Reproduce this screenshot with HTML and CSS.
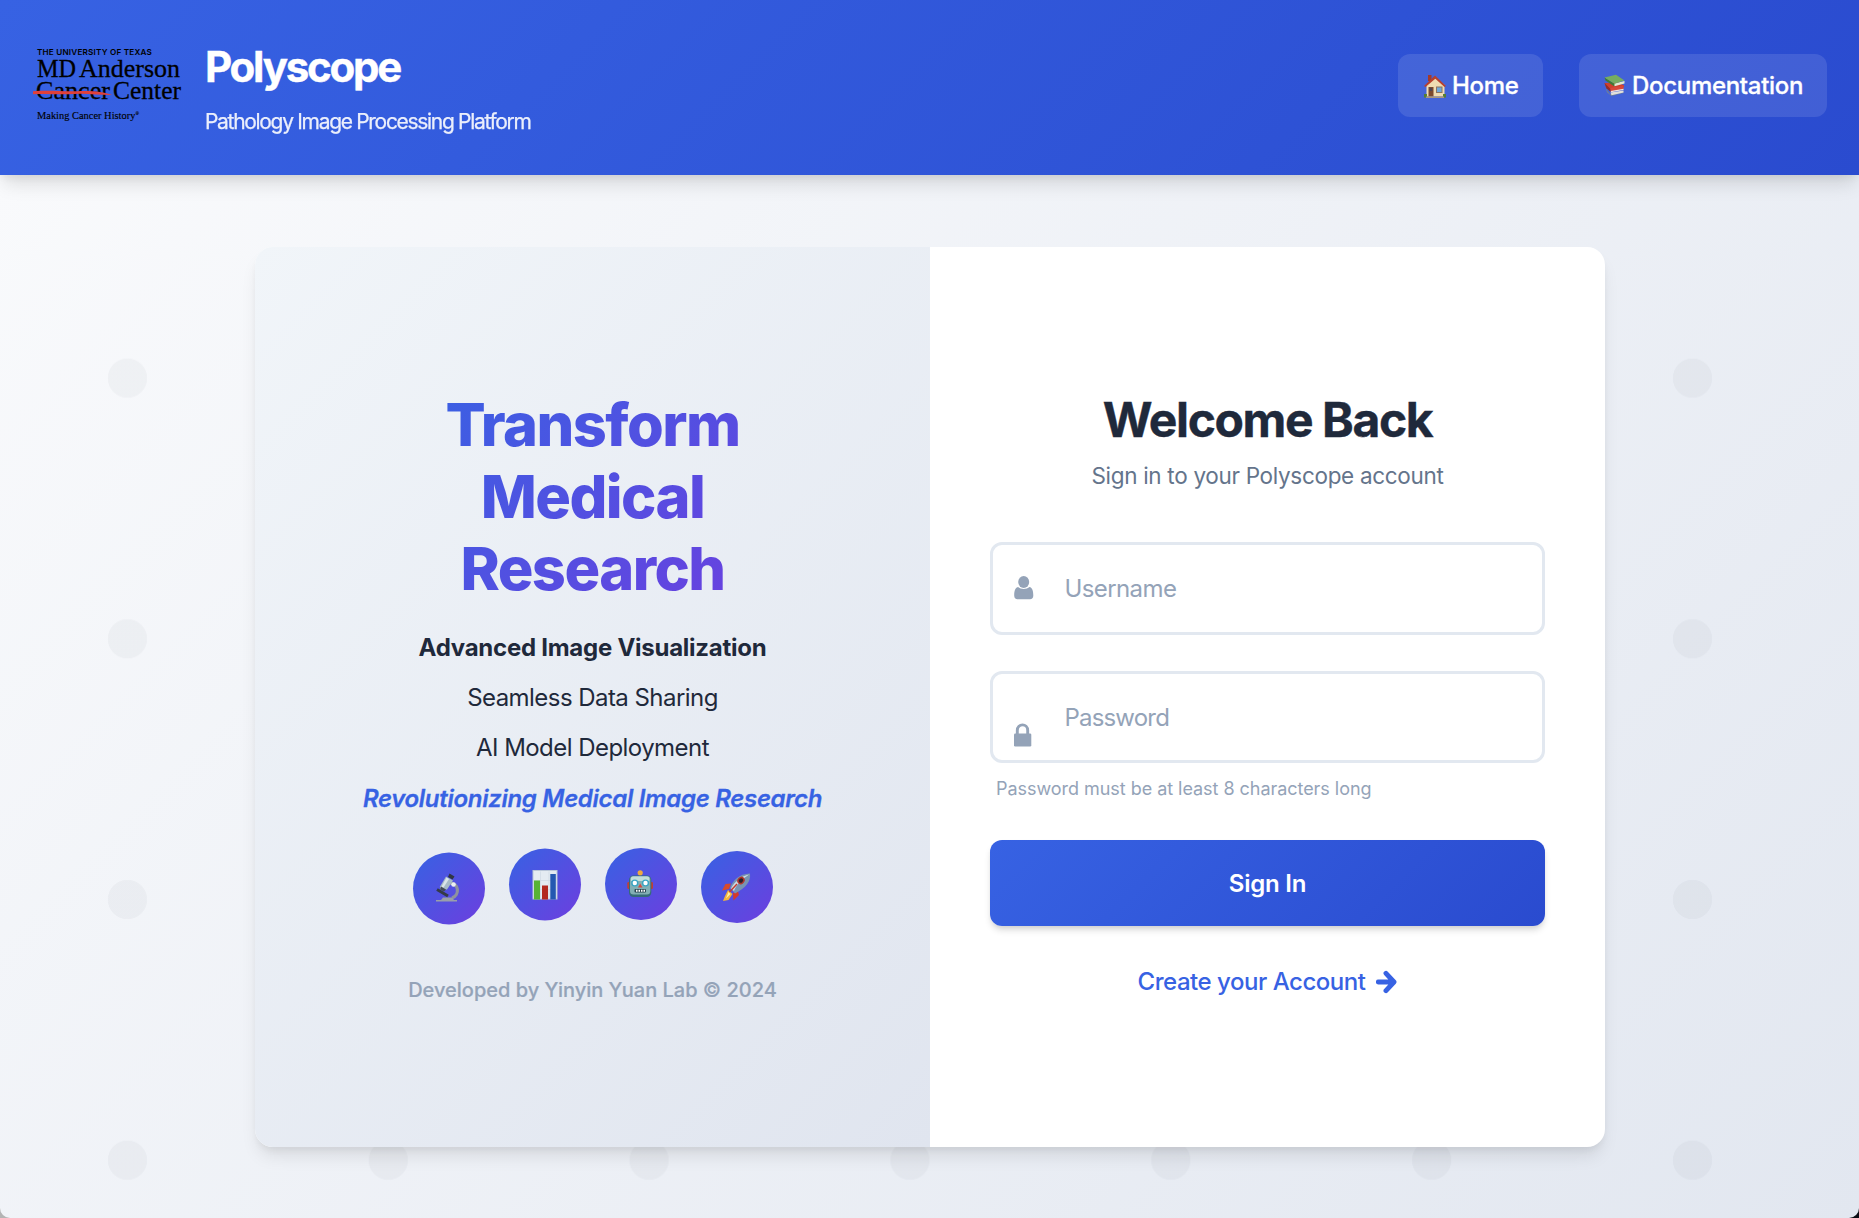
FILE: index.html
```html
<!DOCTYPE html>
<html lang="en">
<head>
<meta charset="utf-8">
<title>Polyscope</title>
<link rel="stylesheet" href="styles.css">
</head>
<body>
<header class="header">
  <svg class="logo" width="152" height="80" viewBox="0 0 152 80" role="img" aria-label="MD Anderson Cancer Center">
    <text class="logo-sans" x="6" y="9.5" textLength="115" lengthAdjust="spacingAndGlyphs">THE UNIVERSITY OF TEXAS</text>
    <text class="logo-serif" x="6" y="32" textLength="39" lengthAdjust="spacingAndGlyphs">MD</text>
    <text class="logo-serif" x="48" y="32" textLength="101" lengthAdjust="spacingAndGlyphs">Anderson</text>
    <text class="logo-serif" x="5" y="53.5" textLength="74" lengthAdjust="spacingAndGlyphs">Cancer</text>
    <text class="logo-serif" x="82" y="53.5" textLength="68" lengthAdjust="spacingAndGlyphs">Center</text>
    <path d="M2 46.200C20 44.700 35 47.200 50 46C62 45.700 73 46.500 81 50C72 50.200 60 49 50 48.800C34 50 18 48.200 2 49.200Z" fill="#e0403a"/>
    <text class="logo-tag" x="6" y="74" textLength="102" lengthAdjust="spacingAndGlyphs">Making Cancer History<tspan class="logo-reg" dy="-4">®</tspan></text>
  </svg>
  <div class="brand">
    <div class="brand-name">Polyscope</div>
    <div class="brand-tagline">Pathology Image Processing Platform</div>
  </div>
  <nav class="nav">
    <a class="nav-link home">
      <svg width="24" height="26" viewBox="0 0 24 26">
        <rect x="5" y="2" width="3.500" height="6" fill="#a33a2a"/>
        <path d="M3.500 12L12.500 4L21.500 12V23.500H3.500Z" fill="#efdcb2"/>
        <path d="M1 13L12 2.500L23 13L21.500 14L12.300 5.800L2.500 14Z" fill="#b7402e"/>
        <rect x="5.500" y="14" width="5" height="9.500" fill="#7c4a2e"/>
        <rect x="6.700" y="15" width="2.500" height="3" fill="#4d4552"/>
        <rect x="13" y="13.500" width="6.500" height="6.500" fill="#8c7360"/>
        <rect x="14" y="14.500" width="4.500" height="4.500" fill="#6fa9d8"/>
        <path d="M1 21H4V24.500H1ZM20 21H23V24.500H20Z" fill="#557e35"/>
        <rect x="3" y="23.500" width="18" height="1.500" fill="#a9977b"/>
      </svg>
      <span>Home</span>
    </a>
    <a class="nav-link docs">
      <svg width="24" height="26" viewBox="0 0 24 26">
        <path d="M2.500 15L7 21L20.500 18.500V20L8.500 23L4 19.500Z" fill="#6d7f9a"/>
        <path d="M7.500 19.500L20.500 17.500V19.500L8.500 22.300Z" fill="#e2e0dc"/>
        <path d="M1.500 10L16 9.500L21 12.500V14L7.500 17L3 14Z" fill="#cf3f2c"/>
        <path d="M7 15L20.500 12.500V16L8 18.500Z" fill="#d8483a"/>
        <path d="M7.500 18L20.500 15.800V17L8 19.200Z" fill="#efe2dd"/>
        <path d="M1.500 10L7 15.500L8 19L3.500 15.500Z" fill="#8f2d2b"/>
        <path d="M1.500 4.500L12 11L11.500 13.500L2.500 7.500Z" fill="#3d7a36"/>
        <path d="M11.500 10.500L21.500 8V10.500L11.500 13.300Z" fill="#dde8d3"/>
        <path d="M1.500 4.500L13 1.800L21.500 7.500L11.500 10.800Z" fill="#76ad60"/>
      </svg>
      <span>Documentation</span>
    </a>
  </nav>
</header>
<main class="stage">
  <div class="card">
    <section class="intro">
      <h1>Transform Medical Research</h1>
      <p class="feature lead">Advanced Image Visualization</p>
      <p class="feature">Seamless Data Sharing</p>
      <p class="feature">AI Model Deployment</p>
      <p class="feature slogan">Revolutionizing Medical Image Research</p>
      <div class="badges">
        <span class="badge b1">
          <svg width="32" height="32" viewBox="0 0 32 32">
            <path d="M18 12C27 11 28 24 20 26.500" fill="none" stroke="#8e929e" stroke-width="3.200"/>
            <path d="M4 28.500H25V30H4ZM11 26H20L22 28.500H9Z" fill="#9a9faa"/>
            <path d="M5 18L16 24.500" stroke="#343a47" stroke-width="3"/>
            <path d="M14 5L21 9L15 18L8.500 18.500L8 15Z" fill="#a6bac6"/>
            <path d="M14.500 6L17 7.500L11.500 16L9 16Z" fill="#d9e5e9"/>
            <path d="M9 15L14 18L12 20L8 18Z" fill="#424a56"/>
            <path d="M17.500 2L22.500 5L20.500 8L16 5.500Z" fill="#303642"/>
            <circle cx="21.500" cy="13" r="2.300" fill="#eceff2"/>
          </svg>
        </span>
        <span class="badge b2">
          <svg width="32" height="32" viewBox="0 0 32 32">
            <rect x="3.500" y="1.500" width="25" height="29.500" fill="#b9c6d8"/>
            <rect x="4.500" y="2.500" width="23" height="27.500" fill="#e4ebf2"/>
            <path d="M11.500 3V30M20 3V30M5 12H27M5 21H27" stroke="#ced9e4" stroke-width=".7"/>
            <rect x="5" y="12" width="6" height="19" fill="#58b336"/>
            <rect x="13" y="17" width="6" height="14" fill="#b32820"/>
            <rect x="21.300" y="5.500" width="5.500" height="25.500" fill="#2458b1"/>
          </svg>
        </span>
        <span class="badge b3">
          <svg width="32" height="32" viewBox="0 0 32 32">
            <path d="M15 5H17.500V9H15Z" fill="#8c8a7c"/>
            <circle cx="16.200" cy="4.800" r="2.600" fill="#efa93f"/>
            <rect x="3.300" y="14" width="3" height="7" rx="1.300" fill="#bd4036"/>
            <rect x="26" y="14" width="3" height="7" rx="1.300" fill="#bd4036"/>
            <rect x="5" y="7.500" width="22.300" height="21.500" rx="4.500" fill="#356b78"/>
            <rect x="6" y="8" width="20.300" height="18.500" rx="3.500" fill="#82afb4"/>
            <path d="M7 13V10Q7 8.500 9 8.500H23Q25.300 8.500 25.300 10V13Z" fill="#c2dcda"/>
            <circle cx="10.800" cy="15" r="3.600" fill="#3aa5c3"/><circle cx="21.500" cy="15" r="3.600" fill="#3aa5c3"/>
            <circle cx="10.800" cy="15" r="2.200" fill="#fff"/><circle cx="21.500" cy="15" r="2.200" fill="#fff"/>
            <path d="M16.200 15.500L18.500 19.500H14Z" fill="#d8493d"/>
            <rect x="10.500" y="21" width="11.500" height="3.600" rx="1" fill="#2a4652"/>
            <path d="M12 22.800H21" stroke="#fff" stroke-width="2" stroke-dasharray="1.500 1"/>
          </svg>
        </span>
        <span class="badge b4">
          <svg width="32" height="32" viewBox="0 0 32 32">
            <path d="M11 13.500L5.500 14L2 20.500L9 19Z" fill="#d84a2c"/>
            <path d="M18 21.500L19 25L13.500 30.500L13 23Z" fill="#d33a2a"/>
            <path d="M8 20L12.500 24L8.500 30L3 31L5 26Z" fill="#f5b43c"/>
            <path d="M8.500 22L10.500 24L6 28.500Z" fill="#fff0a4"/>
            <path d="M30 3.500C31 11 26 18 15 23.500L10 18C13 10 19 4 30 3.500Z" fill="#7894b1"/>
            <path d="M29 4.500C22 6 15 11 11 18.500L14 21C17 13 23 9 29 4.500Z" fill="#cddbe5"/>
            <ellipse cx="21" cy="10.500" rx="4" ry="3.400" transform="rotate(-45 21 10.500)" fill="#b3342b"/>
            <ellipse cx="21" cy="10.500" rx="2.400" ry="2" transform="rotate(-45 21 10.500)" fill="#24232e"/>
            <path d="M17 14L9.500 22" stroke="#c53b30" stroke-width="1.500"/>
          </svg>
        </span>
      </div>
      <p class="credit">Developed by Yinyin Yuan Lab © 2024</p>
    </section>
    <section class="signin">
      <h2>Welcome Back</h2>
      <p class="sub">Sign in to your Polyscope account</p>
      <form>
        <div class="field">
          <input class="input user" type="text" placeholder="Username" aria-label="Username">
          <svg class="field-icon user-icon" width="20" height="26" viewBox="0 0 20 26">
            <path d="M4 12C5.500 13.300 7.500 14 9.700 14S14 13.300 15.500 12C18.300 12.500 19.300 16 19.300 20.500C19.300 23 18 24.200 16 24.200H3.500C1.500 24.200 .2 23 .2 20.500C.2 16 1.200 12.500 4 12Z" fill="#94a3b8"/>
            <ellipse cx="9.700" cy="7" rx="5.500" ry="6" fill="#94a3b8"/>
          </svg>
        </div>
        <div class="field second">
          <input class="input pass" type="password" placeholder="Password" aria-label="Password">
          <svg class="field-icon lock-icon" width="18" height="24" viewBox="0 0 18 24">
            <path d="M3.300 12V7.500C3.300 0 13.700 0 13.700 7.500V12" fill="none" stroke="#94a3b8" stroke-width="2.900"/>
            <rect y="10.500" width="17.300" height="13" rx="1.300" fill="#94a3b8"/>
          </svg>
        </div>
        <p class="hint">Password must be at least 8 characters long</p>
        <button class="submit" type="button">Sign In</button>
      </form>
      <a class="create">
        <span>Create your Account</span>
        <svg width="21" height="24" viewBox="0 0 21 24"><path d="M2.300 12H15M10 3.300L18 12L10 20.700" fill="none" stroke="#3762e3" stroke-width="4.900" stroke-linecap="round" stroke-linejoin="round"/></svg>
      </a>
    </section>
  </div>
</main>
</body>
</html>
```
FILE: styles.css
```css
* { box-sizing: border-box; }

body {
  margin: 0;
  height: 1218px;
  overflow: hidden;
  display: flex;
  flex-direction: column;
  font-family: Inter, "Noto Sans", sans-serif;
  color: #1f293b;
  background: linear-gradient(90deg, #b4b4b4 50%, #0b0d14 50%);
}

h1, h2, p { margin: 0; }

.header {
  position: relative;
  z-index: 1;
  flex: none;
  display: flex;
  align-items: flex-start;
  height: 175px;
  padding: 41px 32px 0 31px;
  background: linear-gradient(135deg, #3762e3, #2a4bcf);
  box-shadow: 0 12px 18px -4px rgba(0, 0, 0, .13), 0 5px 7px -2px rgba(0, 0, 0, .05);
}

.logo { margin-top: 4px; flex: none; overflow: visible; }
.logo-sans { font: 600 8px Inter, sans-serif; letter-spacing: .2px; }
.logo-serif { font: 26px "Liberation Serif", serif; stroke: #000; stroke-width: .3px; }
.logo-tag { font: 11px "Liberation Serif", serif; stroke: #000; stroke-width: .15px; }
.logo-reg { font-size: 5px; }

.brand { margin-left: 22px; padding-top: 1px; color: #fff; white-space: nowrap; }
.brand-name { font-size: 42px; font-weight: 700; line-height: 50px; letter-spacing: -2.250px; -webkit-text-stroke: .4px #fff; }
.brand-tagline { margin-top: 15px; font-size: 21px; line-height: 30px; letter-spacing: -1.310px; opacity: .9; -webkit-text-stroke: .25px #fff; }

.nav { display: flex; gap: 36px; margin: 13px 0 0 auto; }
.nav-link {
  display: flex;
  align-items: center;
  gap: 5px;
  height: 63px;
  border-radius: 12px;
  background: rgba(255, 255, 255, .11);
  color: #fff;
  font-size: 24px;
  font-weight: 500;
  letter-spacing: -.3px;
  -webkit-text-stroke: .3px #fff;
}
.home { width: 145px; padding-left: 25px; }
.docs { width: 248px; padding-left: 24px; }
.nav-link svg { flex: none; }

.stage {
  position: relative;
  flex: 1;
  display: flex;
  justify-content: center;
  align-items: flex-start;
  padding: 72px 0 0 1px;
  border-radius: 0 0 10px 10px;
  background:
    radial-gradient(circle, rgba(30, 41, 59, .035) 19.300px, transparent 20px) -3px 72.800px / 260.850px 260.700px,
    linear-gradient(135deg, #f9fafc, #e2e7f0);
}

.card {
  display: grid;
  grid-template-columns: 1fr 1fr;
  width: 1350px;
  height: 900px;
  border-radius: 18px;
  overflow: hidden;
  background: #fff;
  box-shadow: 0 12px 18px -4px rgba(0, 0, 0, .1), 0 5px 7px -2px rgba(0, 0, 0, .05);
}

.intro {
  display: flex;
  flex-direction: column;
  align-items: center;
  padding-top: 141px;
  background: linear-gradient(135deg, #f1f5f9, #e0e5ef);
}
.intro h1 {
  width: 390px;
  text-align: center;
  font-size: 59.500px;
  font-weight: 800;
  line-height: 72px;
  letter-spacing: -1.550px;
  background: linear-gradient(135deg, #3762e3, #6d3edf);
  -webkit-background-clip: text;
  background-clip: text;
  color: transparent;
}
.feature { font-size: 24px; line-height: 50px; letter-spacing: -.55px; white-space: nowrap; }
.lead { margin-top: 19px; font-weight: 700; letter-spacing: -.26px; }
.slogan { margin-top: 1px; font-weight: 600; font-style: italic; color: #3762e3; letter-spacing: -.3px; -webkit-text-stroke: .3px #3762e3; }

.badges { display: flex; gap: 24px; margin-top: 24px; }
.badge {
  display: flex;
  align-items: center;
  justify-content: center;
  width: 72px;
  height: 72px;
  border-radius: 50%;
  background: linear-gradient(135deg, #3762e3, #6d3edf);
}
.b1 { transform: translateY(4.500px); }
.b2 { transform: translateY(.5px); }
.b4 { transform: translateY(3px); }
.b1 svg, .b4 svg { margin: -2px 2px 0 0; }
.b3 svg { margin-right: 1px; }

.credit { margin-top: 55px; font-size: 20px; font-weight: 500; line-height: 30px; color: #94a3b8; white-space: nowrap; -webkit-text-stroke: .2px #94a3b8; }

.signin { display: flex; flex-direction: column; align-items: center; padding: 144px 60px 0; }
.signin h2 { font-size: 48px; font-weight: 700; line-height: 58px; letter-spacing: -1.400px; -webkit-text-stroke: .4px #1f293b; }
.sub { margin-top: 9px; font-size: 22.500px; line-height: 36px; letter-spacing: -.31px; color: #64748b; }

form { width: 555px; margin-top: 48px; }
.field { position: relative; height: 93px; }
.second { height: 92px; margin-top: 36px; }
.input {
  display: block;
  width: 100%;
  height: 100%;
  padding: 0 24px 0 71.500px;
  border: 3px solid #e2e8f0;
  border-radius: 12px;
  background: #fff;
  font: 24px Inter, "Noto Sans", sans-serif;
}
.input::placeholder { color: #94a3b8; opacity: 1; }
.user { letter-spacing: -.6px; }
.pass { letter-spacing: -.82px; }
.field-icon { position: absolute; left: 24px; }
.user-icon { top: 33px; }
.lock-icon { top: 52px; }
.hint { margin: 12px 0 0 6px; font-size: 18px; line-height: 28px; letter-spacing: -.04px; color: #94a3b8; }
.submit {
  display: block;
  width: 100%;
  height: 86px;
  margin-top: 37px;
  border: 0;
  border-radius: 12px;
  background: linear-gradient(135deg, #3762e3, #2a4bcf);
  box-shadow: 0 5px 7px -1px rgba(0, 0, 0, .14), 0 3px 5px -2px rgba(0, 0, 0, .08);
  color: #fff;
  font: 600 24px Inter, sans-serif;
  letter-spacing: -.2px;
}
.create {
  display: flex;
  align-items: center;
  gap: 11px;
  margin-top: 38px;
  line-height: 36px;
  font-size: 24px;
  font-weight: 500;
  letter-spacing: -.47px;
  color: #3762e3;
}
```
